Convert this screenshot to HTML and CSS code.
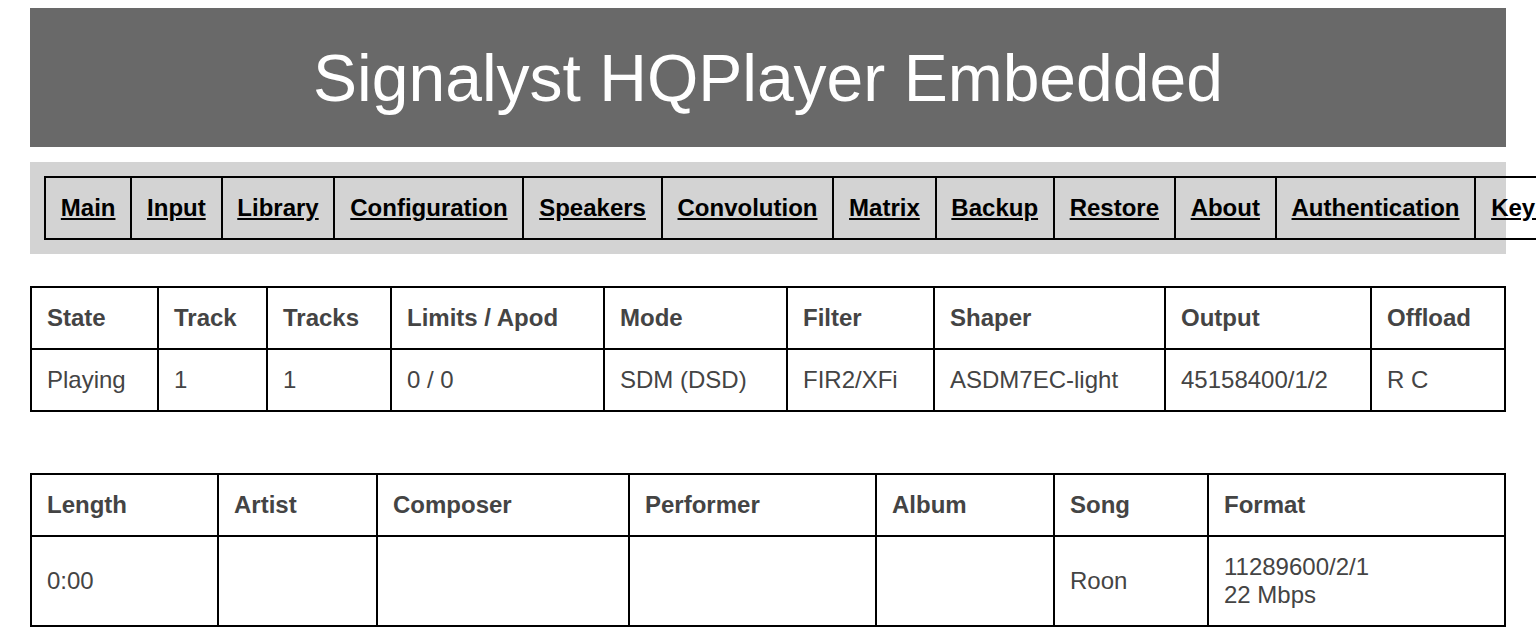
FILE: index.html
```html
<!DOCTYPE html>
<html lang="en">
<head>
    <meta charset="UTF-8">
    <meta name="viewport" content="width=device-width, initial-scale=1.0">
    <title>Signalyst HQPlayer Embedded</title>
    <link rel="stylesheet" href="styles.css">
</head>
<body>
    <div class="header">
        <h1>Signalyst HQPlayer Embedded</h1>
    </div>

    <div class="nav">
        <table class="nav-table">
            <tr>
                <td><a href="#">Main</a></td>
                <td><a href="#">Input</a></td>
                <td><a href="#">Library</a></td>
                <td><a href="#">Configuration</a></td>
                <td><a href="#">Speakers</a></td>
                <td><a href="#">Convolution</a></td>
                <td><a href="#">Matrix</a></td>
                <td><a href="#">Backup</a></td>
                <td><a href="#">Restore</a></td>
                <td><a href="#">About</a></td>
                <td><a href="#">Authentication</a></td>
                <td><a href="#">Keys</a></td>
            </tr>
        </table>
    </div>

    <table class="status status-player">
        <tr>
            <th>State</th>
            <th>Track</th>
            <th>Tracks</th>
            <th>Limits / Apod</th>
            <th>Mode</th>
            <th>Filter</th>
            <th>Shaper</th>
            <th>Output</th>
            <th>Offload</th>
        </tr>
        <tr>
            <td>Playing</td>
            <td>1</td>
            <td>1</td>
            <td>0 / 0</td>
            <td>SDM (DSD)</td>
            <td>FIR2/XFi</td>
            <td>ASDM7EC-light</td>
            <td>45158400/1/2</td>
            <td>R C</td>
        </tr>
    </table>

    <table class="status status-track">
        <tr>
            <th>Length</th>
            <th>Artist</th>
            <th>Composer</th>
            <th>Performer</th>
            <th>Album</th>
            <th>Song</th>
            <th>Format</th>
        </tr>
        <tr>
            <td>0:00</td>
            <td></td>
            <td></td>
            <td></td>
            <td></td>
            <td>Roon</td>
            <td>11289600/2/1<br>22 Mbps</td>
        </tr>
    </table>
</body>
</html>
```

FILE: styles.css
```css
html {
    overflow: hidden;
}
body {
    font-family: 'Liberation Sans', Arial, sans-serif;
    margin: 0;
    padding: 8px 30px;
    background-color: #fff;
}
.header {
    background-color: #696969;
    height: 139px;
    display: flex;
    align-items: center;
    justify-content: center;
}
.header h1 {
    margin: 0;
    color: #fff;
    font-size: 66px;
    font-weight: normal;
}
.nav {
    background-color: #d3d3d3;
    margin-top: 15px;
    padding: 14px;
    height: 64px;
}
.nav-table {
    border-collapse: collapse;
    white-space: nowrap;
    width: max-content;
}
.nav-table td {
    border: 2px solid #000;
    padding: 16px 14.8px;
    font-size: 24px;
    font-weight: bold;
}
.nav-table a {
    color: #000;
}
.status {
    width: 100%;
    border-collapse: collapse;
    table-layout: fixed;
    color: #444;
    font-size: 24px;
}
.status th,
.status td {
    border: 2px solid #000;
    padding: 16px 15px;
    text-align: left;
}
.status-player {
    margin-top: 32px;
}
.status-track {
    margin-top: 61px;
}
.status-player th:nth-child(1) { width: 95px; }
.status-player th:nth-child(2) { width: 77px; }
.status-player th:nth-child(3) { width: 92px; }
.status-player th:nth-child(4) { width: 181px; }
.status-player th:nth-child(5) { width: 151px; }
.status-player th:nth-child(6) { width: 115px; }
.status-player th:nth-child(7) { width: 199px; }
.status-player th:nth-child(8) { width: 174px; }
.status-track th:nth-child(1) { width: 155px; }
.status-track th:nth-child(2) { width: 127px; }
.status-track th:nth-child(3) { width: 220px; }
.status-track th:nth-child(4) { width: 215px; }
.status-track th:nth-child(5) { width: 146px; }
.status-track th:nth-child(6) { width: 122px; }
```
